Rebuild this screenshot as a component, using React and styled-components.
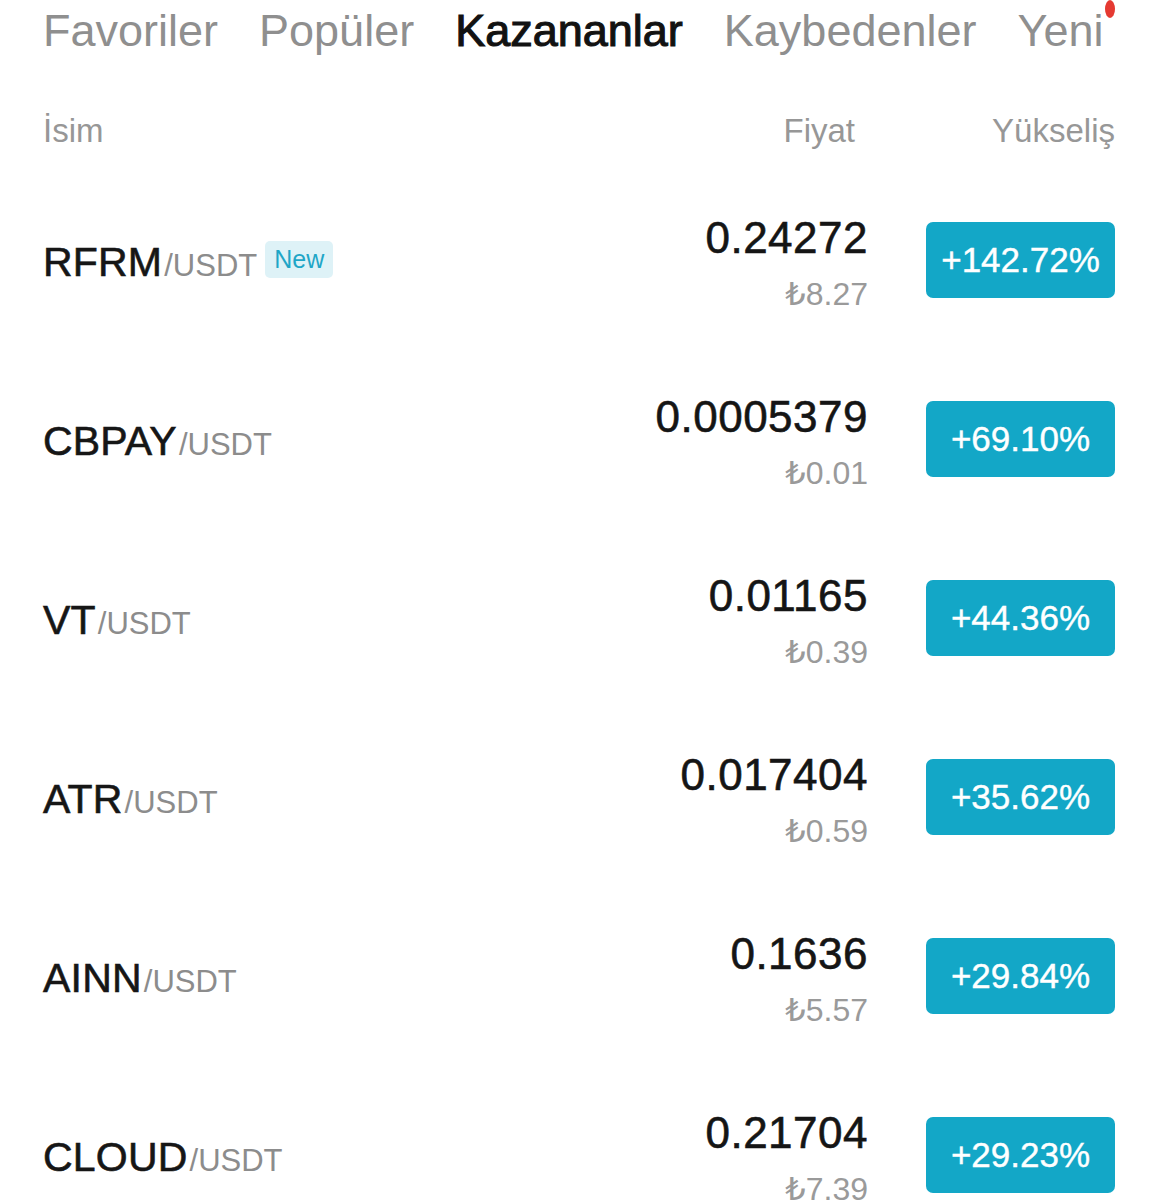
import React from "react";
import styled, { createGlobalStyle } from "styled-components";

const Global = createGlobalStyle`
  html, body { margin: 0; padding: 0; background: #ffffff; }
  body { font-family: "Liberation Sans", Arial, "DejaVu Sans", sans-serif; }
`;

const Page = styled.div`
  width: 1158px;
  height: 1200px;
  overflow: hidden;
  box-sizing: border-box;
  padding: 6px 43px 0 43px;
  background: #fff;
`;

const Tabs = styled.div`
  position: relative;
  display: flex;
  gap: 41px;
  height: 50px;
`;

const Tab = styled.div`
  font-size: 45px;
  line-height: 50px;
  white-space: nowrap;
  color: ${(p) => (p.$active ? "#121212" : "#8f8f8f")};
  font-weight: 400;
  -webkit-text-stroke: ${(p) => (p.$active ? "1.1px #121212" : "0")};
`;

const Dot = styled.span`
  position: absolute;
  right: 0;
  top: -6px;
  width: 10px;
  height: 18px;
  border-radius: 50%;
  background: #e53a32;
`;

const Header = styled.div`
  display: grid;
  grid-template-columns: 1fr auto 189px;
  column-gap: 58px;
  margin-top: 55px;
  height: 40px;
  font-size: 33px;
  line-height: 40px;
  color: #979797;
`;

const HeadCell = styled.div`
  text-align: ${(p) => p.$align || "left"};
  padding-right: ${(p) => p.$pr || 0}px;
`;

const Row = styled.div`
  display: grid;
  grid-template-columns: 1fr auto 189px;
  column-gap: 58px;
  align-items: center;
  height: 179px;
`;

const Rows = styled.div`
  margin-top: 19px;
`;

const Pair = styled.div`
  display: flex;
  align-items: baseline;
  white-space: nowrap;
  margin-top: 4px;
`;

const Base = styled.span`
  font-size: 41px;
  line-height: 48px;
  color: #161616;
  -webkit-text-stroke: 0.6px #161616;
  letter-spacing: 0.2px;
`;

const Quote = styled.span`
  font-size: 31px;
  color: #8c8c8c;
  margin-left: 2px;
`;

const NewTag = styled.span`
  align-self: center;
  margin-left: 8px;
  margin-top: -4px;
  padding: 0 9px;
  height: 37px;
  line-height: 37px;
  font-size: 25px;
  color: #1fa6c7;
  background: #def2f7;
  border-radius: 5px;
`;

const PriceCol = styled.div`
  display: flex;
  flex-direction: column;
  align-items: flex-end;
  gap: 14px;
  margin-top: 7px;
`;

const Price = styled.div`
  font-size: 44px;
  line-height: 48px;
  letter-spacing: 0.5px;
  color: #151515;
  -webkit-text-stroke: 0.6px #151515;
`;

const SubPrice = styled.div`
  font-size: 32px;
  line-height: 36px;
  color: #9a9a9a;
`;

const Change = styled.div`
  height: 76px;
  border-radius: 7px;
  background: #13a7c7;
  color: #fff;
  font-size: 35px;
  -webkit-text-stroke: 0.4px #fff;
  display: flex;
  align-items: center;
  justify-content: center;
`;

const tabs = ["Favoriler", "Popüler", "Kazananlar", "Kaybedenler", "Yeni"];

const data = [
  { base: "RFRM", price: "0.24272", try: "8.27", change: "+142.72%", isNew: true },
  { base: "CBPAY", price: "0.0005379", try: "0.01", change: "+69.10%" },
  { base: "VT", price: "0.01165", try: "0.39", change: "+44.36%" },
  { base: "ATR", price: "0.017404", try: "0.59", change: "+35.62%" },
  { base: "AINN", price: "0.1636", try: "5.57", change: "+29.84%" },
  { base: "CLOUD", price: "0.21704", try: "7.39", change: "+29.23%" },
];

export default function App() {
  return (
    <Page>
      <Global />
      <Tabs>
        {tabs.map((t) => (
          <Tab key={t} $active={t === "Kazananlar"}>
            {t}
          </Tab>
        ))}
        <Dot />
      </Tabs>
      <Header>
        <HeadCell>İsim</HeadCell>
        <HeadCell $align="right" $pr={13}>Fiyat</HeadCell>
        <HeadCell $align="right">Yükseliş</HeadCell>
      </Header>
      <Rows>
        {data.map((d) => (
          <Row key={d.base}>
            <Pair>
              <Base>{d.base}</Base>
              <Quote>/USDT</Quote>
              {d.isNew && <NewTag>New</NewTag>}
            </Pair>
            <PriceCol>
              <Price>{d.price}</Price>
              <SubPrice>₺{d.try}</SubPrice>
            </PriceCol>
            <Change>{d.change}</Change>
          </Row>
        ))}
      </Rows>
    </Page>
  );
}
